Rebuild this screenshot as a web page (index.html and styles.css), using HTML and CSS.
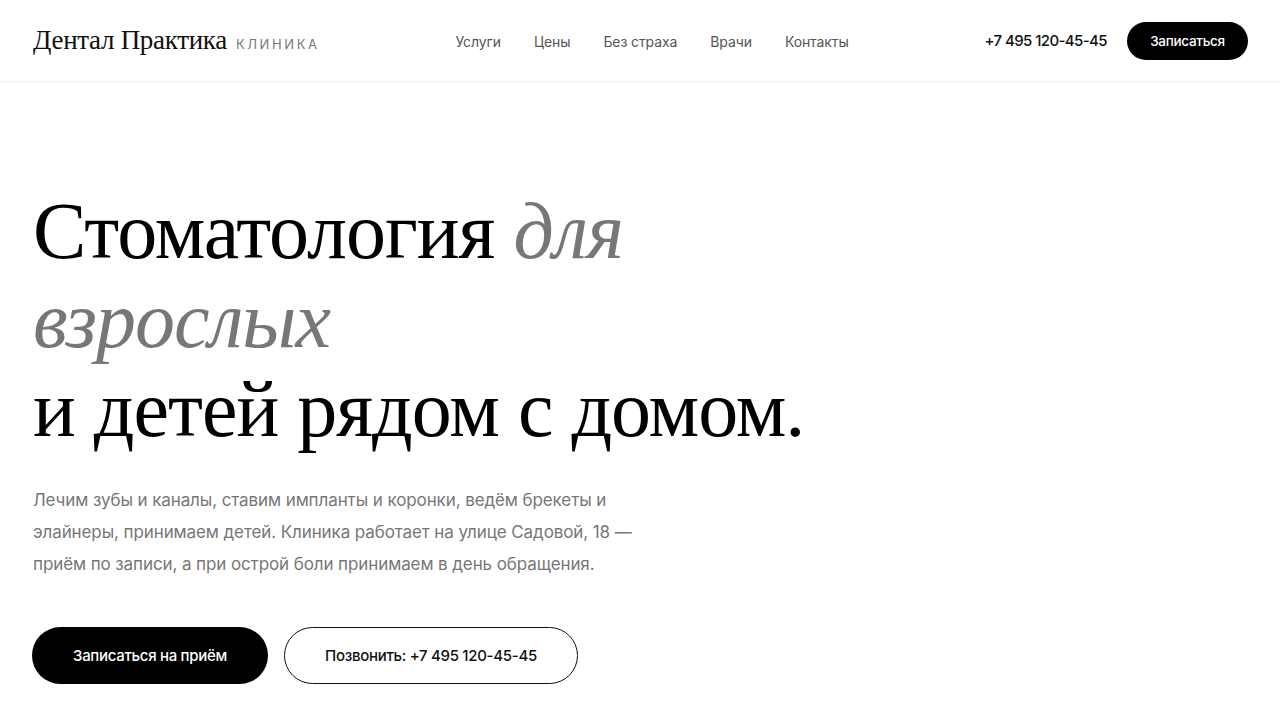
FILE: index.html
```html
<!DOCTYPE html>
<html lang="ru">
<head>
<meta charset="utf-8">
<title>Дентал Практика</title>
<link rel="stylesheet" href="styles.css">
</head>
<body>
<header class="header">
  <a class="logo" href="#">
    <span class="logo-name">Дентал Практика</span>
    <span class="logo-sub">клиника</span>
  </a>
  <nav class="nav">
    <a href="#">Услуги</a>
    <a href="#">Цены</a>
    <a href="#">Без страха</a>
    <a href="#">Врачи</a>
    <a href="#">Контакты</a>
  </nav>
  <div class="header-right">
    <a class="phone" href="#">+7 495 120-45-45</a>
    <a class="btn btn-small" href="#">Записаться</a>
  </div>
</header>
<main class="hero">
  <h1 class="title">Стоматология <em>для<br>взрослых</em><br>и детей рядом с домом.</h1>
  <p class="lead">Лечим зубы и каналы, ставим импланты и коронки, ведём брекеты и элайнеры, принимаем детей. Клиника работает на улице Садовой, 18 — приём по записи, а при острой боли принимаем в день обращения.</p>
  <div class="actions">
    <a class="btn btn-primary" href="#">Записаться на приём</a>
    <a class="btn btn-outline" href="#">Позвонить: +7 495 120-45-45</a>
  </div>
</main>
</body>
</html>
```

FILE: styles.css
```css
* { box-sizing: border-box; }
html, body { margin: 0; padding: 0; background: #fff; }
body {
  font-family: Inter, "Noto Sans", sans-serif;
  color: #111;
}
a { text-decoration: none; color: inherit; }

.header {
  height: 82px;
  border-bottom: 1px solid #ececec;
  display: flex;
  align-items: center;
  justify-content: space-between;
  padding: 1px 32px 0 33px;
}
.logo { display: flex; align-items: baseline; gap: 9px; margin-top: -1px; }
.logo-name {
  font-family: "Liberation Serif", serif;
  font-size: 27px;
  color: #111;
  letter-spacing: -0.3px;
}
.logo-sub {
  font-size: 13px;
  text-transform: uppercase;
  letter-spacing: 2.6px;
  color: #777;
}
.nav { display: flex; gap: 33px; }
.nav a { font-size: 14px; color: #555; letter-spacing: -0.1px; }
.header-right { display: flex; align-items: center; gap: 20px; margin-top: -1px; }
.phone { font-size: 15px; font-weight: 500; color: #111; letter-spacing: -0.6px; }

.btn {
  display: inline-flex;
  align-items: center;
  justify-content: center;
  border-radius: 999px;
  font-weight: 500;
  letter-spacing: -0.3px;
}
.btn-small {
  height: 38px;
  width: 121px;
  background: #000;
  color: #fff;
  font-size: 13.5px;
}

.hero { padding: 105px 32px 0; }
.title {
  margin: 0 0 0 1px;
  font-family: "Liberation Serif", serif;
  font-weight: 400;
  font-size: 80px;
  line-height: 89px;
  letter-spacing: -1px;
  color: #000;
  white-space: nowrap;
}
.title em { color: #777; }
.lead {
  margin: 30px 0 0 1px;
  max-width: 640px;
  font-size: 17px;
  line-height: 32px;
  color: #777;
  letter-spacing: -0.1px;
}
.actions { display: flex; gap: 16px; margin-top: 47px; }
.btn-primary {
  height: 57px;
  width: 236px;
  background: #000;
  color: #fff;
  font-size: 15px;
}
.btn-outline {
  height: 57px;
  width: 294px;
  border: 1px solid #111;
  color: #111;
  font-size: 15px;
}
```
